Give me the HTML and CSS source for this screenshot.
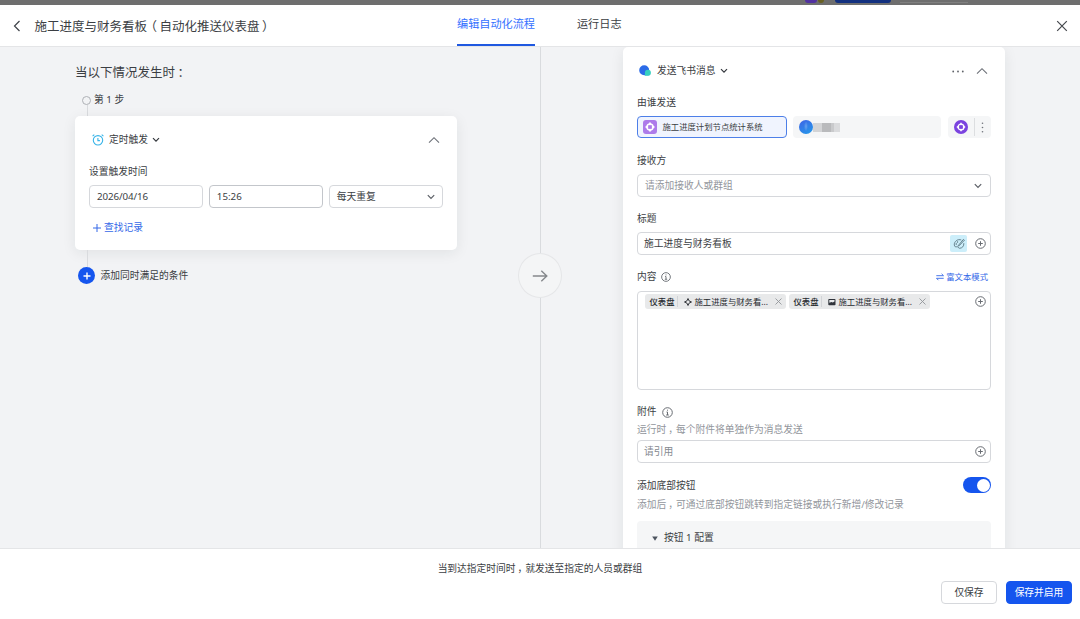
FILE: index.html
```html
<!DOCTYPE html>
<html lang="zh-CN">
<head>
<meta charset="utf-8">
<title>施工进度与财务看板</title>
<link rel="stylesheet" href="styles.css">
</head>
<body>
<div class="app">
  <div class="backdrop"><i class="dot violet"></i><i class="dot olive"></i><i class="bar navy"></i><i class="bar pale"></i></div>
  <header class="header">
    <div class="title-group">
      <svg class="back" width="8" height="12" viewBox="0 0 8 12"><path d="M6.5 1 1.5 6l5 5"/></svg>
      <h1>施工进度与财务看板<span class="p-open">（</span>自动化推送仪表盘<span class="p-close">）</span></h1>
    </div>
    <nav class="tabs">
      <span class="tab active">编辑自动化流程</span>
      <span class="tab">运行日志</span>
    </nav>
    <svg class="close" width="12" height="12" viewBox="0 0 12 12"><path d="m1.2 1.2 9.6 9.6m0-9.6-9.6 9.6"/></svg>
  </header>

  <main class="main">
    <section class="pane-left">
      <h2>当以下情况发生时<span class="p">：</span></h2>
      <div class="step"><i class="ring"></i>第 1 步</div>
      <i class="link-line short"></i>
      <div class="card trigger">
        <div class="card-head">
          <svg class="alarm" width="12" height="12" viewBox="0 0 12 12"><circle cx="6" cy="6.3" r="4.7"/><path d="M5.9 4v2.6h2M.6 2.2 2.3.7M11.4 2.2 9.7.7"/></svg>
          <span class="card-name">定时触发</span>
          <svg class="caret dark" width="8" height="6" viewBox="0 0 8 6"><path d="m1 1.2 3 3 3-3"/></svg>
          <svg class="fold" width="12" height="8" viewBox="0 0 12 8"><path d="m1 6.7 5-5 5 5"/></svg>
        </div>
        <div class="label">设置触发时间</div>
        <div class="time-row">
          <div class="field date">2026/04/16</div>
          <div class="field time">15:26</div>
          <div class="field repeat"><span>每天重复</span><svg class="caret" width="8" height="6" viewBox="0 0 8 6"><path d="m.8 1.2 3.2 3.2 3.2-3.2"/></svg></div>
        </div>
        <div class="add-link"><svg width="8" height="8" viewBox="0 0 8 8"><path d="M4 0v8M0 4h8"/></svg>查找记录</div>
      </div>
      <i class="link-line"></i>
      <div class="add-cond"><span class="plus"><svg width="8" height="8" viewBox="0 0 8 8"><path d="M4 .5v7M.5 4h7"/></svg></span>添加同时满足的条件</div>
    </section>

    <div class="divider"><span class="arrow"><svg width="16" height="12" viewBox="0 0 16 12"><path d="M.8 6h14M9.3.8 14.8 6l-5.5 5.2"/></svg></span></div>

    <section class="pane-right">
      <div class="card action">
        <div class="action-head">
          <svg width="12" height="12" viewBox="0 0 12 12"><path d="M5.2.2a5 5 0 0 1 5 5v5h-5a5 5 0 0 1 0-10Z" fill="#2b6be8"/><path d="M8.9 4.7a3 3 0 0 1 0 6H5.9V7.7a3 3 0 0 1 3-3Z" fill="#35d0c0"/></svg>
          <span class="card-name">发送飞书消息</span>
          <svg class="caret dark" width="8" height="6" viewBox="0 0 8 6"><path d="m1 1.2 3 3 3-3"/></svg>
          <svg class="more" width="12" height="3" viewBox="0 0 12 3"><circle cx="1.2" cy="1.5" r=".9"/><circle cx="6" cy="1.5" r=".9"/><circle cx="10.8" cy="1.5" r=".9"/></svg>
          <svg class="fold" width="12" height="8" viewBox="0 0 12 8"><path d="m1 6.7 5-5 5 5"/></svg>
        </div>

        <div class="label l-sender">由谁发送</div>
        <div class="senders">
          <div class="sender selected"><svg width="14" height="14" viewBox="0 0 14 14"><rect width="14" height="14" rx="3" fill="#ad7bea"/><circle cx="7" cy="7" r="3" fill="none" stroke="#fff" stroke-width="1.5"/><path d="M7 2.6v2.6m0 3.6v2.6M2.6 7h2.6m3.6 0h2.6" stroke="#fff" stroke-width="1.8"/><circle cx="7" cy="7" r="1.5" fill="#ad7bea"/></svg>施工进度计划节点统计系统</div>
          <div class="sender person"><i class="avatar"></i><span class="mosaic"><i></i><i></i><i></i><i></i></span></div>
          <div class="sender bot"><svg width="14" height="14" viewBox="0 0 14 14"><circle cx="7" cy="7" r="7" fill="#7b43df"/><circle cx="7" cy="7" r="2.9" fill="none" stroke="#fff" stroke-width="1.4"/><path d="M7 2.8v2.4m0 3.6v2.4M2.8 7h2.4m3.6 0h2.4" stroke="#fff" stroke-width="1.5"/><circle cx="7" cy="7" r="1.5" fill="#7b43df"/></svg><i class="sep"></i><svg class="more" width="3" height="11" viewBox="0 0 3 11"><circle cx="1.5" cy="1.2" r=".8"/><circle cx="1.5" cy="5.5" r=".8"/><circle cx="1.5" cy="9.8" r=".8"/></svg></div>
        </div>

        <div class="label l-to">接收方</div>
        <div class="field wide receiver"><span>请添加接收人或群组</span><svg class="caret" width="8" height="6" viewBox="0 0 8 6"><path d="m.8 1.2 3.2 3.2 3.2-3.2"/></svg></div>

        <div class="label l-title">标题</div>
        <div class="field wide subject"><span>施工进度与财务看板</span><b class="palette"><svg width="12" height="12" viewBox="0 0 12 12"><path d="M10.8 5.2c.3 3-1.6 5-4.3 5.1-.9 0-1-.7-1.4-1.2-.7-.9-1.9.1-2.8-.3C-.1 6.8 2 2.1 5.7 1.7c1-.1 1.9 0 2.6.3M5.4 7.4l5-6 1 .8-5.3 5.6-.9.2Z"/><circle cx="3.2" cy="6" r=".4"/><circle cx="4.5" cy="4" r=".4"/></svg></b><svg class="ref" width="11" height="11" viewBox="0 0 11 11"><circle cx="5.5" cy="5.5" r="4.8"/><path d="M5.5 3.2v4.6M3.2 5.5h4.6"/></svg></div>

        <div class="label l-body">内容<svg class="ref" width="10" height="10" viewBox="0 0 11 11"><circle cx="5.5" cy="5.5" r="4.8"/><path d="M5.5 2.7v1M4.5 5h1v3M4.2 8h2.6"/></svg><span class="mode"><svg width="8" height="8" viewBox="0 0 8 8"><path d="M.3 2.7h7.2L5.6.8M7.7 5.3H.5l1.9 1.9"/></svg>富文本模式</span></div>
        <div class="editor">
          <div class="chip"><b>仪表盘</b><i></i><svg class="spark" width="8" height="8" viewBox="0 0 8 8"><path d="M4 .5 5.1 2.9 7.5 4 5.1 5.1 4 7.5 2.9 5.1.5 4l2.4-1.1Z"/></svg><span>施工进度与财务看...</span><svg class="x" width="7" height="7" viewBox="0 0 7 7"><path d="m.5.5 6 6m0-6-6 6"/></svg></div>
          <div class="chip"><b>仪表盘</b><i></i><svg width="8" height="8" viewBox="0 0 8 8"><rect x=".3" y=".9" width="7.2" height="6.4" rx=".8" fill="#30343b"/><path d="M1.3 1.9h5.2v1.5l-1.7 1.2-1.2-.7-2.3.8Z" fill="#e9ebed"/></svg><span>施工进度与财务看...</span><svg class="x" width="7" height="7" viewBox="0 0 7 7"><path d="m.5.5 6 6m0-6-6 6"/></svg></div>
          <svg class="ref" width="11" height="11" viewBox="0 0 11 11"><circle cx="5.5" cy="5.5" r="4.8"/><path d="M5.5 3.2v4.6M3.2 5.5h4.6"/></svg>
        </div>

        <div class="label l-file">附件<svg class="ref" width="11" height="11" viewBox="0 0 11 11"><circle cx="5.5" cy="5.5" r="4.8"/><path d="M5.5 2.7v1M4.5 5h1v3M4.2 8h2.6"/></svg></div>
        <div class="hint">运行时<span class="p">，</span>每个附件将单独作为消息发送</div>
        <div class="field wide quote"><span>请引用</span><svg class="ref" width="11" height="11" viewBox="0 0 11 11"><circle cx="5.5" cy="5.5" r="4.8"/><path d="M5.5 3.2v4.6M3.2 5.5h4.6"/></svg></div>

        <div class="label l-button">添加底部按钮<span class="switch"><i></i></span></div>
        <div class="hint">添加后<span class="p">，</span>可通过底部按钮跳转到指定链接或执行新增/修改记录</div>
        <div class="config"><svg width="6" height="5" viewBox="0 0 6 5"><path d="M.2.4h5.6L3 4.7Z" fill="#4d5560"/></svg>按钮 1 配置</div>
      </div>
    </section>
  </main>

  <footer class="footer">
    <p>当到达指定时间时<span class="p">，</span>就发送至指定的人员或群组</p>
    <div class="actions"><button class="btn">仅保存</button><button class="btn primary">保存并启用</button></div>
  </footer>
</div>
</body>
</html>
```
FILE: styles.css
```css
* { box-sizing: border-box; }
body {
  margin: 0;
  font: 9.75px/14px "Noto Sans", "Noto Sans CJK SC", sans-serif;
  color: #3b3e43;
  background: #fff;
}
h1, h2, p { margin: 0; font-weight: 400; }
svg { display: block; flex: none; fill: none; stroke: none; }
/* Centre full-width punctuation in its cell */
.p { margin: 0 -.2em 0 .2em; }
.p-open { margin: 0 .2em 0 -.2em; }
.p-close { margin: 0 -.2em 0 .2em; }
.app { width: 1080px; height: 619px; overflow: hidden; display: flex; flex-direction: column; }

.backdrop { height: 5px; flex: none; background: #6e6e6e; display: flex; padding-left: 805px; overflow: hidden; }
.backdrop i { height: 3px; }
.dot.violet { width: 12px; background: #5131a0; border-radius: 0 0 6px 6px; }
.dot.olive { width: 6px; margin-left: 1px; background: #686022; border-radius: 0 0 4px 4px; }
.bar.navy { width: 56px; margin-left: 11px; background: #12307f; border-radius: 0 0 3px 3px; }
.bar.pale { width: 68px; margin-left: 9px; border-bottom: 1px solid #808080; }

.header {
  height: 42px; flex: none; background: #fff; border-bottom: 1px solid #e4e5e7;
  display: grid; grid-template-columns: 457px 1fr auto; padding-right: 12px;
}
.title-group { display: flex; align-items: center; gap: 13.5px; padding-left: 13px; }
.title-group h1 { font-size: 12.5px; line-height: 18px; padding-top: 2px; white-space: nowrap; }
.back { stroke: #3f4349; stroke-width: 1.2; }
.tabs { display: flex; gap: 42px; font-size: 11.15px; }
.tab { height: 41px; line-height: 38px; }
.tab.active { color: #3370ff; border-bottom: 2px solid #1f58e0; }
.close { align-self: center; stroke: #45484d; stroke-width: 1.2; }

.main { height: 501px; flex: none; background: #f2f3f5; display: flex; overflow: hidden; }
.pane-left { width: 540px; padding: 17px 0 0 75px; }
.pane-left h2 { font-size: 12.5px; line-height: 18px; height: 18px; white-space: nowrap; }
.step { height: 14px; margin-top: 11px; padding-left: 7px; display: flex; align-items: center; gap: 3px; }
.ring { width: 9px; height: 9px; border: 1px solid #aeb1b6; border-radius: 50%; }
.link-line { display: block; width: 1px; height: 17px; margin-left: 12px; background: #d9dbde; }
.link-line.short { height: 11px; margin-top: -2px; }
.card { width: 382px; background: #fff; border-radius: 5px; box-shadow: 0 3px 14px rgba(31, 35, 41, .08); }
.trigger { height: 134px; padding: 16px 14px 0; }
.card-head { display: flex; align-items: center; height: 16px; padding: 0 3px; }
.card-name { margin: 0 4px 0 5px; }
.fold { margin-left: auto; stroke: #6c7077; stroke-width: 1.1; }
.caret { stroke: #5b5f66; stroke-width: 1.2; }
.caret.dark { stroke: #33373d; }
.alarm { stroke: #37b4e8; stroke-width: 1.1; }
.label { height: 14px; display: flex; align-items: center; }
.trigger .label { margin-top: 17px; }
.time-row { display: grid; grid-template-columns: repeat(3, 1fr); gap: 5.5px; margin-top: 6px; }
.field { height: 23px; border: 1px solid #d6d8dc; border-radius: 4px; padding: 0 7px; display: flex; align-items: center; background: #fff; }
.field svg { margin-left: auto; }
.date { letter-spacing: -.1px; }
.time { border-color: #c3c6cb; padding-top: 1px; }
.add-link { display: flex; align-items: center; gap: 3.5px; margin-top: 13px; padding-left: 3.5px; color: #3468e8; }
.add-link svg { stroke: #3468e8; }
.add-cond { display: flex; align-items: center; gap: 5.5px; padding-left: 3px; }
.plus { width: 17px; height: 17px; border-radius: 50%; background: #1555ee; display: grid; place-items: center; }
.plus svg { stroke: #fff; stroke-width: 1.4; }

.divider { width: 1px; background: #d9dbde; position: relative; }
.arrow {
  position: absolute; left: -22px; top: 206px; width: 44px; height: 45px; border-radius: 50%;
  border: 1px solid #e5e6e8; background: #f4f5f6; display: grid; place-items: center;
}
.arrow svg { stroke: #85888c; stroke-width: 1.4; }

.pane-right { flex: 1; padding-left: 82px; }
.action { height: 520px; padding: 16px 14px 0; }
.action-head { height: 16px; display: flex; align-items: center; padding: 0 3px 0 2px; }
.action-head .card-name { margin-left: 6px; }
.action-head .more { margin-left: auto; fill: #5f6369; }
.action-head .fold { margin-left: 12px; }
.l-sender { margin-top: 17px; }
.senders { display: flex; height: 22px; margin-top: 6px; font-size: 8.35px; }
.sender { background: #f5f6f7; border-radius: 4px; display: flex; align-items: center; }
.sender.selected { width: 150px; border: 1px solid #4d7fe8; background: #f0f4fe; padding-left: 5px; gap: 5.5px; }
.person { width: 148px; margin-left: 6px; padding-left: 6px; }
.avatar { width: 14px; height: 14px; border-radius: 50%; background: radial-gradient(ellipse 2px 5px at 50% 45%, #6aa3ee, transparent), linear-gradient(150deg, #3d63e6, #259bea); }
.mosaic { display: flex; }
.mosaic i { width: 8px; height: 9px; background: #d3d4d6; }
.mosaic i:first-child { width: 9px; }
.mosaic i:nth-child(2) { width: 9px; background: #b9babc; }
.mosaic i:nth-child(3) { width: 3px; background: #c9cacc; }
.mosaic i:last-child { width: 6px; background: #dadbdd; }
.bot { width: 43px; margin-left: 7px; padding-left: 5.5px; }
.sep { width: 1px; height: 18px; margin: 0 6.5px 0 6px; background: #dcdee0; }
.bot .more { fill: #70747a; }
.l-to { margin-top: 16px; }
.field.wide { width: 354px; }
.receiver { margin-top: 6px; padding-right: 8px; color: #92969c; }
.l-title { margin-top: 15px; }
.subject { margin-top: 6px; padding: 0 4px 0 6px; }
.palette { width: 17px; height: 17px; margin-left: auto; background: #cceefa; border-radius: 2px; display: grid; place-items: center; }
.palette svg { margin: 0; stroke: #5b7783; stroke-width: .9; }
.ref { stroke: #686c72; stroke-width: 1; }
.field.subject .ref { margin-left: 8px; }
.l-body { margin-top: 15px; }
.label > .ref { margin-left: 4px; }
.mode { margin-left: auto; margin-right: 3px; display: flex; align-items: center; gap: 2px; font-size: 8.35px; color: #3468e8; }
.mode svg { stroke: #3468e8; stroke-width: .9; }
.editor { height: 99px; margin-top: 7px; padding: 2px 4px 0 7px; border: 1px solid #d6d8dc; border-radius: 4px; display: flex; align-items: flex-start; gap: 3px; font-size: 8.35px; }
.editor > .ref { margin: 2px 0 0 auto; }
.chip { width: 141px; height: 15px; background: #e8e9ea; border-radius: 3px; display: flex; align-items: center; padding-left: 4.5px; color: #25282d; }
.chip b { font-weight: 500; }
.chip i { width: 1px; height: 11px; background: #d2d4d7; margin: 0 6px 0 2.5px; }
.chip span { margin-left: 2.5px; white-space: nowrap; }
.chip .x { margin: 0 4px 0 auto; stroke: #92959a; stroke-width: .9; }
.spark { stroke: #34373c; stroke-width: 1; }
.l-file { margin-top: 15px; }
.label.l-file > .ref { margin-left: 5.5px; }
.hint { margin-top: 4px; height: 14px; color: #92969c; white-space: nowrap; }
.quote { margin-top: 3px; padding: 0 4px 0 6px; color: #85898f; }
.l-button { margin-top: 16px; }
.switch { width: 28px; height: 16px; margin: -2px 0 0 auto; border-radius: 8px; background: #1555ee; display: flex; justify-content: flex-end; padding: 1.5px; }
.switch i { width: 13px; height: 13px; border-radius: 50%; background: #fff; }
.l-button + .hint { margin-top: 5px; }
.config { height: 60px; margin-top: 9px; padding: 10px 0 0 15px; background: #f5f6f7; border-radius: 4px; display: flex; align-items: flex-start; gap: 6px; }
.config svg { margin-top: 5px; }

.footer { flex: 1; background: #fff; border-top: 1px solid #e4e5e7; }
.footer p { margin-top: 13px; height: 14px; text-align: center; }
.actions { display: flex; justify-content: flex-end; gap: 9px; padding: 5px 8px 0 0; }
.btn { width: 56px; height: 23px; padding: 0; font: inherit; color: #3b3e43; background: #fff; border: 1px solid #d6d8dc; border-radius: 4px; }
.btn.primary { width: 66px; color: #fff; background: #1555ee; border-color: #1555ee; }
```
